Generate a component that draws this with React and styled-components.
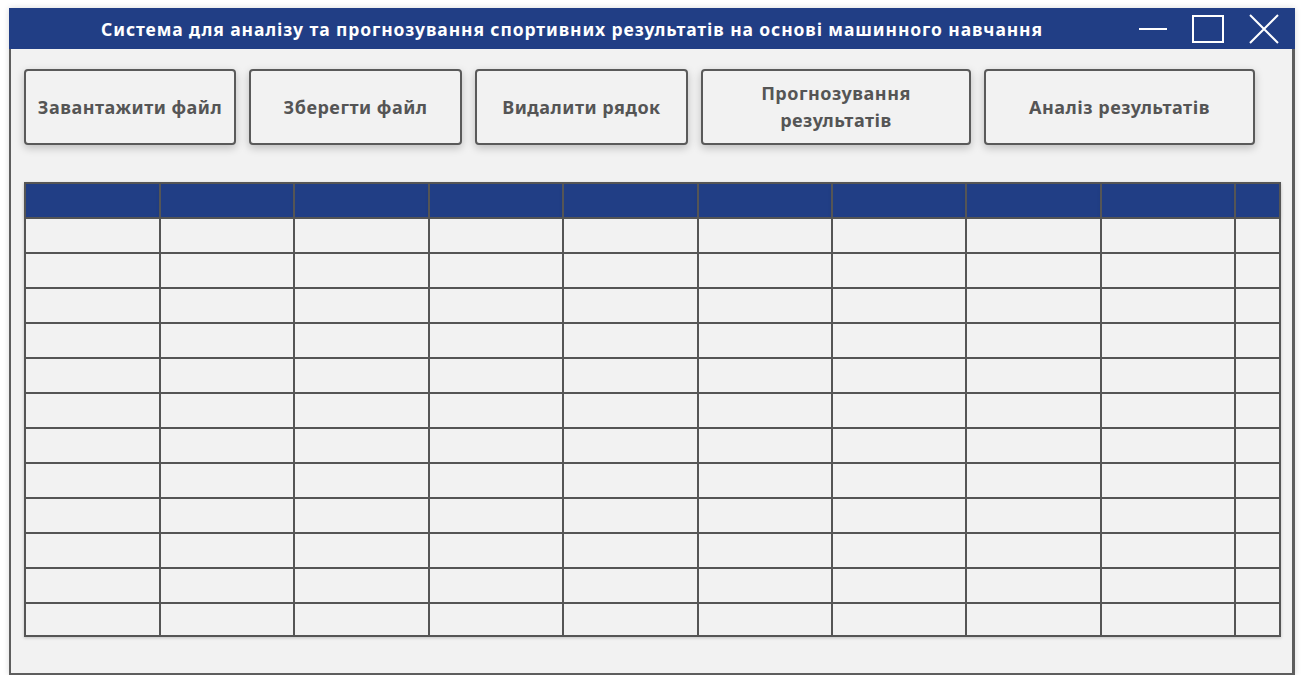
import React from 'react';
import styled, { createGlobalStyle } from 'styled-components';

const GlobalStyle = createGlobalStyle`
    html, body {
        margin: 0;
        padding: 0;
        background: #ffffff;
        font-family: "Noto Sans", "Open Sans", sans-serif;
    }
`;

const Window = styled.div`
    margin: 8px 0 0 9px;
    width: 1286px;
    height: 667px;
    display: flex;
    flex-direction: column;
    box-shadow: 0 0 6px rgba(0, 0, 0, 0.15);
`;

const TitleBar = styled.div`
    height: 41px;
    background: #213e85;
    display: flex;
    align-items: center;
    flex-shrink: 0;
`;

const Title = styled.div`
    flex: 1;
    text-align: center;
    color: #ffffff;
    font-weight: 700;
    font-size: 17.5px;
    letter-spacing: 0.9px;
    padding-right: 4px;
    white-space: nowrap;
`;

const Controls = styled.div`
    display: flex;
    align-items: center;
    gap: 25px;
    padding-right: 16px;
`;

const Body = styled.div`
    flex: 1;
    background: #f2f2f2;
    border: 2px solid #5e5e5e;
    border-top: none;
    border-right-width: 3px;
    padding: 20px 12px 0 13px;
    display: flex;
    flex-direction: column;
`;

const Toolbar = styled.div`
    display: flex;
    gap: 13px;
`;

const Button = styled.button`
    width: ${(p) => p.width}px;
    height: 76px;
    background: #f2f2f2;
    border: 2px solid #5a5a5a;
    border-radius: 4px;
    box-shadow: 0 3px 8px rgba(0, 0, 0, 0.22);
    font-family: "Noto Sans", "Open Sans", sans-serif;
    font-weight: 700;
    font-size: 18px;
    letter-spacing: 0.5px;
    line-height: 27px;
    color: #555555;
    padding: 0 ${(p) => (p.wrap ? 24 : 4)}px;
    white-space: ${(p) => (p.wrap ? 'normal' : 'nowrap')};
`;

const Grid = styled.table`
    margin-top: 37px;
    width: 1255px;
    border-collapse: collapse;
    table-layout: fixed;
    box-shadow: 0 1px 3px rgba(0, 0, 0, 0.2);
`;

const HeadCell = styled.th`
    height: 33px;
    padding: 0;
    background: #213e85;
    border: 2px solid #555555;
    box-shadow: 0 4px 6px -2px rgba(0, 0, 0, 0.2);
`;

const Cell = styled.td`
    height: ${(p) => (p.last ? 31 : 33)}px;
    padding: 0;
    border: 2px solid #555555;
    background: #f2f2f2;
`;

const columns = [135, 134, 135, 134, 135, 134, 134, 135, 134, 45];
const rows = Array.from({ length: 12 }, (_, i) => i);

const buttons = [
    { label: 'Завантажити файл', width: 212 },
    { label: 'Зберегти файл', width: 213 },
    { label: 'Видалити рядок', width: 213 },
    { label: 'Прогнозування результатів', width: 270, wrap: true },
    { label: 'Аналіз результатів', width: 271 },
];

const Minimize = () => (
    <svg width="28" height="4" viewBox="0 0 28 4">
        <line x1="0" y1="2" x2="28" y2="2" stroke="#ffffff" strokeWidth="2" />
    </svg>
);

const Maximize = () => (
    <svg width="32" height="28" viewBox="0 0 32 28">
        <rect x="1" y="1" width="30" height="26" fill="none" stroke="#ffffff" strokeWidth="2" />
    </svg>
);

const Close = () => (
    <svg width="30" height="30" viewBox="0 0 30 30">
        <path d="M1 1 L29 29 M29 1 L1 29" stroke="#ffffff" strokeWidth="2" fill="none" />
    </svg>
);

export default function App() {
    return (
        <>
            <GlobalStyle />
            <Window>
                <TitleBar>
                    <Title>
                        Система для аналізу та прогнозування спортивних результатів на основі машинного навчання
                    </Title>
                    <Controls>
                        <Minimize />
                        <Maximize />
                        <Close />
                    </Controls>
                </TitleBar>
                <Body>
                    <Toolbar>
                        {buttons.map((b) => (
                            <Button key={b.label} width={b.width} wrap={b.wrap}>
                                {b.label}
                            </Button>
                        ))}
                    </Toolbar>
                    <Grid>
                        <colgroup>
                            {columns.map((w, i) => (
                                <col key={i} style={{ width: w }} />
                            ))}
                        </colgroup>
                        <thead>
                            <tr>
                                {columns.map((_, i) => (
                                    <HeadCell key={i} />
                                ))}
                            </tr>
                        </thead>
                        <tbody>
                            {rows.map((r) => (
                                <tr key={r}>
                                    {columns.map((_, i) => (
                                        <Cell key={i} last={r === rows.length - 1} />
                                    ))}
                                </tr>
                            ))}
                        </tbody>
                    </Grid>
                </Body>
            </Window>
        </>
    );
}
